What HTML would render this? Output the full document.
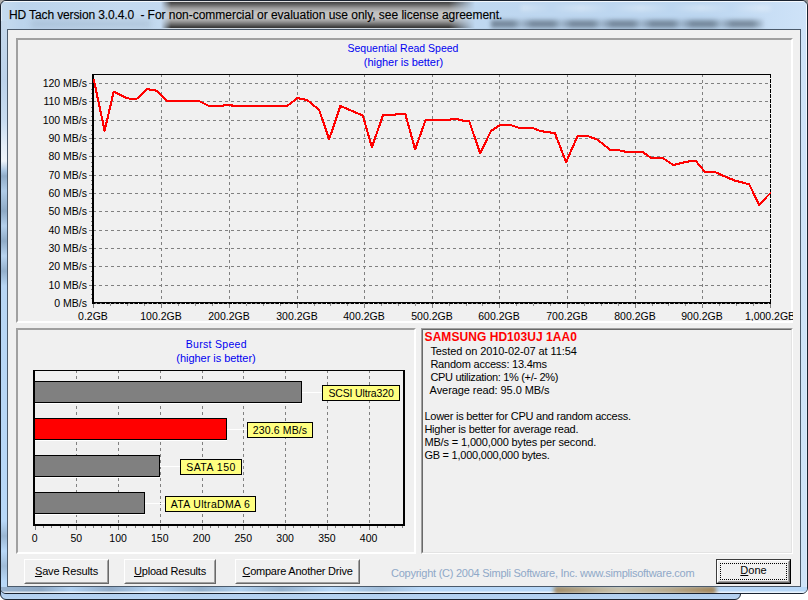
<!DOCTYPE html>
<html><head><meta charset="utf-8"><style>
html,body{margin:0;padding:0;width:808px;height:600px;overflow:hidden;background:#fff;position:relative;font-family:"Liberation Sans",sans-serif;}
.abs{position:absolute;}
#win2{position:absolute;left:0;top:586px;width:739px;height:12px;border:1px solid #1c2633;border-radius:0 0 6px 6px;background:linear-gradient(#a8c8ec,#b8d4f2);}
#win{position:absolute;left:0;top:0;width:806px;height:592px;border:1px solid #1a2330;border-radius:6px;overflow:hidden;
 background:linear-gradient(90deg,#c6dcf0 0,#bcd4ec 20px,#c4daf0 120px,#bcd6f0 700px,#cfe3f8 808px);}
#win .blob{position:absolute;}
#client{position:absolute;left:7px;top:29px;width:792px;height:556px;border:1px solid #4b5a6b;background:#f0f0f0;}
.title{position:absolute;left:8px;top:7px;font-size:12px;color:#000;white-space:pre;letter-spacing:-0.05px;-webkit-text-stroke:0.25px rgba(0,0,0,0.6);}
.sunk{position:absolute;box-sizing:border-box;border:2px solid;border-color:#a0a0a0 #fff #fff #a0a0a0;}
.edge{position:absolute;box-sizing:border-box;border:1px solid;border-color:#a0a0a0 #fff #fff #a0a0a0;}
.edge>div{position:absolute;left:0;top:0;right:0;bottom:0;border:1px solid;border-color:#696969 #e3e3e3 #e3e3e3 #696969;}
svg text.lab{font-family:"Liberation Sans";font-size:10.5px;fill:#000;}
svg text.ttl{font-family:"Liberation Sans";font-size:10.5px;fill:#0000f0;}
.info{position:absolute;font-size:11px;color:#000;white-space:pre;line-height:13px;}
.btn{position:absolute;box-sizing:border-box;background:#f0f0f0;border:1px solid;border-color:#fff #696969 #696969 #fff;}
.btn>div{position:absolute;left:0;top:0;right:0;bottom:0;border:1px solid;border-color:#f0f0f0 #a0a0a0 #a0a0a0 #f0f0f0;}
.btn span{position:absolute;left:0;right:0;top:5px;text-align:center;font-size:11px;color:#000;white-space:pre;line-height:13px;}
.btn u{text-decoration:underline;text-underline-offset:1px;}
</style></head><body>
<div class="abs" style="left:0;top:0;width:8px;height:8px;background:#b0b0b0"></div>
<div class="abs" style="left:800px;top:0;width:8px;height:8px;background:#909090"></div>
<div id="win2"></div>
<div id="win">
 <div class="blob" style="left:-10px;top:0px;width:830px;height:1px;background:rgba(255,255,255,0.8)"></div>
 <div class="blob" style="left:805px;top:0px;width:1px;height:600px;background:linear-gradient(rgba(255,255,255,0.85),rgba(255,255,255,0.3) 300px)"></div>
 <div class="blob" style="left:0px;top:0px;width:1px;height:600px;background:rgba(255,255,255,0.45)"></div>
 <div class="blob" style="left:160px;top:0px;width:316px;height:28px;background:linear-gradient(#e0e0e0 0,#e0e0e0 1px,#404040 1px,#5a5a5a 3px,#9a9a9a 7px,#c0c0c0 11px,#c4c4c4 17px,#909090 21px,#505050 25px,#3a3a3a 26px,#3a3a3a 27px,#d0d8e0 27px);-webkit-mask-image:linear-gradient(90deg,transparent 0,#000 10px,#000 288px,transparent 314px)"></div>
 <div class="blob" style="left:490px;top:19px;width:272px;height:8px;background:repeating-linear-gradient(90deg,rgba(60,75,90,0.55) 0,rgba(60,75,90,0.55) 22px,rgba(60,75,90,0.2) 30px,rgba(60,75,90,0.5) 40px);filter:blur(2px)"></div>
 <div class="blob" style="left:520px;top:4px;width:250px;height:6px;background:repeating-linear-gradient(90deg,rgba(255,255,255,0.35) 0,rgba(255,255,255,0) 30px,rgba(255,255,255,0.35) 60px);filter:blur(2px)"></div>
 <div class="blob" style="left:30px;top:19px;width:120px;height:8px;background:rgba(120,140,160,0.25);filter:blur(3px)"></div>
 <div class="title"><span style="letter-spacing:-0.12px">HD Tach version 3.0.4.0  - </span><span style="letter-spacing:-0.03px">For non-commercial or evaluation use only, see license agreement.</span></div>
 <div class="blob" style="left:0px;top:20px;width:6px;height:570px;background:linear-gradient(#c4d8ec 0,#bcd2ea 60px,#c8dcf0 100px,#e4eef8 125px,#eef4fa 140px,#a8c4e0 150px,#90acc8 155px,#b0cce8 170px,#8eaac6 190px,#b4d0ec 205px,#90acc8 220px,#b8d4f0 235px,#94b0cc 250px,#b8d6f4 265px,#b8d8f8 500px,#9ab6d2 515px,#b8d8f8 530px,#a0bcd8 545px,#b8d8f8 560px)"></div>
 <div class="blob" style="left:0px;top:586px;width:806px;height:6px;background:linear-gradient(rgba(255,255,255,0) 4px,rgba(255,255,255,0.7) 5px),linear-gradient(90deg,#98b2ce 0,#8ea8c4 40px,#b0d0f0 70px,#92acc8 110px,#b4d4f4 150px,#94b0cc 200px,#b0d0ee 240px,#94b0cc 280px,#b8d8f8 330px,#a0bcd8 380px,#b8d8f8 420px,#b8d8f8 806px)"></div>
 <div class="blob" style="left:553px;top:585px;width:162px;height:8px;background:linear-gradient(90deg,#a08860,#c8c0a8 40%,#b8a888 70%,#a08050);filter:blur(2px)"></div>
</div>
<div id="client"></div>
<div class="sunk" style="left:16px;top:38px;width:777px;height:285px;"></div>
<div class="sunk" style="left:16px;top:328px;width:400px;height:226px;"></div>
<div class="edge" style="left:421px;top:328px;width:372px;height:226px;"><div></div></div>
<svg class="abs" style="left:0;top:0" width="808" height="600" viewBox="0 0 808 600">
<defs><clipPath id="c1"><rect x="18" y="40" width="775" height="281"/></clipPath></defs>
<g clip-path="url(#c1)">
<line x1="93" y1="83.5" x2="770" y2="83.5" stroke="#808080" stroke-width="1" stroke-dasharray="3,3"/>
<line x1="89" y1="83.5" x2="92" y2="83.5" stroke="#808080" stroke-width="1"/>
<line x1="93" y1="101.5" x2="770" y2="101.5" stroke="#808080" stroke-width="1" stroke-dasharray="3,3"/>
<line x1="89" y1="101.5" x2="92" y2="101.5" stroke="#808080" stroke-width="1"/>
<line x1="93" y1="120.5" x2="770" y2="120.5" stroke="#808080" stroke-width="1" stroke-dasharray="3,3"/>
<line x1="89" y1="120.5" x2="92" y2="120.5" stroke="#808080" stroke-width="1"/>
<line x1="93" y1="138.5" x2="770" y2="138.5" stroke="#808080" stroke-width="1" stroke-dasharray="3,3"/>
<line x1="89" y1="138.5" x2="92" y2="138.5" stroke="#808080" stroke-width="1"/>
<line x1="93" y1="156.5" x2="770" y2="156.5" stroke="#808080" stroke-width="1" stroke-dasharray="3,3"/>
<line x1="89" y1="156.5" x2="92" y2="156.5" stroke="#808080" stroke-width="1"/>
<line x1="93" y1="175.5" x2="770" y2="175.5" stroke="#808080" stroke-width="1" stroke-dasharray="3,3"/>
<line x1="89" y1="175.5" x2="92" y2="175.5" stroke="#808080" stroke-width="1"/>
<line x1="93" y1="193.5" x2="770" y2="193.5" stroke="#808080" stroke-width="1" stroke-dasharray="3,3"/>
<line x1="89" y1="193.5" x2="92" y2="193.5" stroke="#808080" stroke-width="1"/>
<line x1="93" y1="211.5" x2="770" y2="211.5" stroke="#808080" stroke-width="1" stroke-dasharray="3,3"/>
<line x1="89" y1="211.5" x2="92" y2="211.5" stroke="#808080" stroke-width="1"/>
<line x1="93" y1="230.5" x2="770" y2="230.5" stroke="#808080" stroke-width="1" stroke-dasharray="3,3"/>
<line x1="89" y1="230.5" x2="92" y2="230.5" stroke="#808080" stroke-width="1"/>
<line x1="93" y1="248.5" x2="770" y2="248.5" stroke="#808080" stroke-width="1" stroke-dasharray="3,3"/>
<line x1="89" y1="248.5" x2="92" y2="248.5" stroke="#808080" stroke-width="1"/>
<line x1="93" y1="266.5" x2="770" y2="266.5" stroke="#808080" stroke-width="1" stroke-dasharray="3,3"/>
<line x1="89" y1="266.5" x2="92" y2="266.5" stroke="#808080" stroke-width="1"/>
<line x1="93" y1="285.5" x2="770" y2="285.5" stroke="#808080" stroke-width="1" stroke-dasharray="3,3"/>
<line x1="89" y1="285.5" x2="92" y2="285.5" stroke="#808080" stroke-width="1"/>
<line x1="91" y1="298.5" x2="92" y2="298.5" stroke="#808080" stroke-width="1"/>
<line x1="91" y1="294.5" x2="92" y2="294.5" stroke="#808080" stroke-width="1"/>
<line x1="91" y1="289.5" x2="92" y2="289.5" stroke="#808080" stroke-width="1"/>
<line x1="91" y1="280.5" x2="92" y2="280.5" stroke="#808080" stroke-width="1"/>
<line x1="91" y1="276.5" x2="92" y2="276.5" stroke="#808080" stroke-width="1"/>
<line x1="91" y1="271.5" x2="92" y2="271.5" stroke="#808080" stroke-width="1"/>
<line x1="91" y1="262.5" x2="92" y2="262.5" stroke="#808080" stroke-width="1"/>
<line x1="91" y1="257.5" x2="92" y2="257.5" stroke="#808080" stroke-width="1"/>
<line x1="91" y1="253.5" x2="92" y2="253.5" stroke="#808080" stroke-width="1"/>
<line x1="91" y1="244.5" x2="92" y2="244.5" stroke="#808080" stroke-width="1"/>
<line x1="91" y1="239.5" x2="92" y2="239.5" stroke="#808080" stroke-width="1"/>
<line x1="91" y1="235.5" x2="92" y2="235.5" stroke="#808080" stroke-width="1"/>
<line x1="91" y1="225.5" x2="92" y2="225.5" stroke="#808080" stroke-width="1"/>
<line x1="91" y1="221.5" x2="92" y2="221.5" stroke="#808080" stroke-width="1"/>
<line x1="91" y1="216.5" x2="92" y2="216.5" stroke="#808080" stroke-width="1"/>
<line x1="91" y1="207.5" x2="92" y2="207.5" stroke="#808080" stroke-width="1"/>
<line x1="91" y1="203.5" x2="92" y2="203.5" stroke="#808080" stroke-width="1"/>
<line x1="91" y1="198.5" x2="92" y2="198.5" stroke="#808080" stroke-width="1"/>
<line x1="91" y1="189.5" x2="92" y2="189.5" stroke="#808080" stroke-width="1"/>
<line x1="91" y1="184.5" x2="92" y2="184.5" stroke="#808080" stroke-width="1"/>
<line x1="91" y1="180.5" x2="92" y2="180.5" stroke="#808080" stroke-width="1"/>
<line x1="91" y1="171.5" x2="92" y2="171.5" stroke="#808080" stroke-width="1"/>
<line x1="91" y1="166.5" x2="92" y2="166.5" stroke="#808080" stroke-width="1"/>
<line x1="91" y1="162.5" x2="92" y2="162.5" stroke="#808080" stroke-width="1"/>
<line x1="91" y1="152.5" x2="92" y2="152.5" stroke="#808080" stroke-width="1"/>
<line x1="91" y1="148.5" x2="92" y2="148.5" stroke="#808080" stroke-width="1"/>
<line x1="91" y1="143.5" x2="92" y2="143.5" stroke="#808080" stroke-width="1"/>
<line x1="91" y1="134.5" x2="92" y2="134.5" stroke="#808080" stroke-width="1"/>
<line x1="91" y1="130.5" x2="92" y2="130.5" stroke="#808080" stroke-width="1"/>
<line x1="91" y1="125.5" x2="92" y2="125.5" stroke="#808080" stroke-width="1"/>
<line x1="91" y1="116.5" x2="92" y2="116.5" stroke="#808080" stroke-width="1"/>
<line x1="91" y1="111.5" x2="92" y2="111.5" stroke="#808080" stroke-width="1"/>
<line x1="91" y1="107.5" x2="92" y2="107.5" stroke="#808080" stroke-width="1"/>
<line x1="91" y1="98.5" x2="92" y2="98.5" stroke="#808080" stroke-width="1"/>
<line x1="91" y1="93.5" x2="92" y2="93.5" stroke="#808080" stroke-width="1"/>
<line x1="91" y1="89.5" x2="92" y2="89.5" stroke="#808080" stroke-width="1"/>
<line x1="161.5" y1="74" x2="161.5" y2="302" stroke="#808080" stroke-width="1" stroke-dasharray="3,3"/>
<line x1="229.5" y1="74" x2="229.5" y2="302" stroke="#808080" stroke-width="1" stroke-dasharray="3,3"/>
<line x1="297.5" y1="74" x2="297.5" y2="302" stroke="#808080" stroke-width="1" stroke-dasharray="3,3"/>
<line x1="364.5" y1="74" x2="364.5" y2="302" stroke="#808080" stroke-width="1" stroke-dasharray="3,3"/>
<line x1="432.5" y1="74" x2="432.5" y2="302" stroke="#808080" stroke-width="1" stroke-dasharray="3,3"/>
<line x1="499.5" y1="74" x2="499.5" y2="302" stroke="#808080" stroke-width="1" stroke-dasharray="3,3"/>
<line x1="567.5" y1="74" x2="567.5" y2="302" stroke="#808080" stroke-width="1" stroke-dasharray="3,3"/>
<line x1="635.5" y1="74" x2="635.5" y2="302" stroke="#808080" stroke-width="1" stroke-dasharray="3,3"/>
<line x1="702.5" y1="74" x2="702.5" y2="302" stroke="#808080" stroke-width="1" stroke-dasharray="3,3"/>
<line x1="93.5" y1="304" x2="93.5" y2="308" stroke="#808080" stroke-width="1"/>
<line x1="161.5" y1="304" x2="161.5" y2="308" stroke="#808080" stroke-width="1"/>
<line x1="229.5" y1="304" x2="229.5" y2="308" stroke="#808080" stroke-width="1"/>
<line x1="297.5" y1="304" x2="297.5" y2="308" stroke="#808080" stroke-width="1"/>
<line x1="364.5" y1="304" x2="364.5" y2="308" stroke="#808080" stroke-width="1"/>
<line x1="432.5" y1="304" x2="432.5" y2="308" stroke="#808080" stroke-width="1"/>
<line x1="499.5" y1="304" x2="499.5" y2="308" stroke="#808080" stroke-width="1"/>
<line x1="567.5" y1="304" x2="567.5" y2="308" stroke="#808080" stroke-width="1"/>
<line x1="635.5" y1="304" x2="635.5" y2="308" stroke="#808080" stroke-width="1"/>
<line x1="702.5" y1="304" x2="702.5" y2="308" stroke="#808080" stroke-width="1"/>
<line x1="770.5" y1="304" x2="770.5" y2="308" stroke="#808080" stroke-width="1"/>
<line x1="110.5" y1="304" x2="110.5" y2="306" stroke="#909090" stroke-width="1"/>
<line x1="127.5" y1="304" x2="127.5" y2="306" stroke="#909090" stroke-width="1"/>
<line x1="144.5" y1="304" x2="144.5" y2="306" stroke="#909090" stroke-width="1"/>
<line x1="178.5" y1="304" x2="178.5" y2="306" stroke="#909090" stroke-width="1"/>
<line x1="195.5" y1="304" x2="195.5" y2="306" stroke="#909090" stroke-width="1"/>
<line x1="212.5" y1="304" x2="212.5" y2="306" stroke="#909090" stroke-width="1"/>
<line x1="246.5" y1="304" x2="246.5" y2="306" stroke="#909090" stroke-width="1"/>
<line x1="263.5" y1="304" x2="263.5" y2="306" stroke="#909090" stroke-width="1"/>
<line x1="280.5" y1="304" x2="280.5" y2="306" stroke="#909090" stroke-width="1"/>
<line x1="314.5" y1="304" x2="314.5" y2="306" stroke="#909090" stroke-width="1"/>
<line x1="330.5" y1="304" x2="330.5" y2="306" stroke="#909090" stroke-width="1"/>
<line x1="347.5" y1="304" x2="347.5" y2="306" stroke="#909090" stroke-width="1"/>
<line x1="381.5" y1="304" x2="381.5" y2="306" stroke="#909090" stroke-width="1"/>
<line x1="398.5" y1="304" x2="398.5" y2="306" stroke="#909090" stroke-width="1"/>
<line x1="415.5" y1="304" x2="415.5" y2="306" stroke="#909090" stroke-width="1"/>
<line x1="449.5" y1="304" x2="449.5" y2="306" stroke="#909090" stroke-width="1"/>
<line x1="466.5" y1="304" x2="466.5" y2="306" stroke="#909090" stroke-width="1"/>
<line x1="482.5" y1="304" x2="482.5" y2="306" stroke="#909090" stroke-width="1"/>
<line x1="516.5" y1="304" x2="516.5" y2="306" stroke="#909090" stroke-width="1"/>
<line x1="533.5" y1="304" x2="533.5" y2="306" stroke="#909090" stroke-width="1"/>
<line x1="550.5" y1="304" x2="550.5" y2="306" stroke="#909090" stroke-width="1"/>
<line x1="584.5" y1="304" x2="584.5" y2="306" stroke="#909090" stroke-width="1"/>
<line x1="601.5" y1="304" x2="601.5" y2="306" stroke="#909090" stroke-width="1"/>
<line x1="618.5" y1="304" x2="618.5" y2="306" stroke="#909090" stroke-width="1"/>
<line x1="652.5" y1="304" x2="652.5" y2="306" stroke="#909090" stroke-width="1"/>
<line x1="668.5" y1="304" x2="668.5" y2="306" stroke="#909090" stroke-width="1"/>
<line x1="685.5" y1="304" x2="685.5" y2="306" stroke="#909090" stroke-width="1"/>
<line x1="719.5" y1="304" x2="719.5" y2="306" stroke="#909090" stroke-width="1"/>
<line x1="736.5" y1="304" x2="736.5" y2="306" stroke="#909090" stroke-width="1"/>
<line x1="753.5" y1="304" x2="753.5" y2="306" stroke="#909090" stroke-width="1"/>
<rect x="92" y="74" width="2" height="230" fill="#000"/>
<rect x="92" y="302" width="679" height="1" fill="#000"/>
<line x1="92" y1="303.5" x2="771" y2="303.5" stroke="#000" stroke-width="1" stroke-dasharray="3.7,1"/>
<rect x="92" y="74" width="679" height="1" fill="#000"/>
<line x1="770.5" y1="74" x2="770.5" y2="302" stroke="#000" stroke-width="1" stroke-dasharray="4,1"/>
<path d="M93.9,80.2 L104.6,130.7 L113.7,91.7 L125.6,97.6 L130.6,99.0 L136.5,99.0 L147.0,89.1 L156.3,90.7 L167.2,101.0 L198.9,101.0 L208.8,105.9 L222.7,105.9 L224.6,105.2 L232.6,105.5 L234.5,106.1 L287.1,106.0 L297.4,98.1 L307.3,100.1 L313.3,105.1 L319.2,110.0 L329.1,139.3 L340.4,106.0 L362.8,115.5 L371.9,147.2 L383.0,115.3 L394.5,115.0 L395.9,114.2 L405.4,114.2 L415.1,149.4 L425.6,120.1 L448.4,120.1 L451.4,119.3 L457.3,119.3 L463.3,120.7 L469.2,121.1 L480.1,153.4 L491.0,131.0 L499.9,125.1 L510.8,125.1 L519.7,128.0 L532.6,128.0 L540.5,131.0 L546.4,132.0 L554.9,133.1 L566.1,162.2 L577.6,136.0 L587.5,136.0 L597.4,139.6 L603.4,144.4 L610.3,149.9 L619.2,150.3 L626.1,151.9 L643.0,152.3 L650.9,157.8 L662.8,158.0 L673.5,165.1 L681.0,163.0 L690.0,161.2 L696.0,161.2 L705.0,172.0 L715.5,172.3 L727.5,177.6 L735.0,180.6 L749.2,184.3 L759.0,204.6 L770.2,193.3" fill="none" stroke="#ff0000" stroke-width="2.1" stroke-linejoin="round" stroke-linecap="round" shape-rendering="crispEdges"/>
<text x="87" y="87" text-anchor="end" class="lab">120 MB/s</text>
<text x="87" y="105" text-anchor="end" class="lab">110 MB/s</text>
<text x="87" y="124" text-anchor="end" class="lab">100 MB/s</text>
<text x="87" y="142" text-anchor="end" class="lab">90 MB/s</text>
<text x="87" y="160" text-anchor="end" class="lab">80 MB/s</text>
<text x="87" y="179" text-anchor="end" class="lab">70 MB/s</text>
<text x="87" y="197" text-anchor="end" class="lab">60 MB/s</text>
<text x="87" y="215" text-anchor="end" class="lab">50 MB/s</text>
<text x="87" y="234" text-anchor="end" class="lab">40 MB/s</text>
<text x="87" y="252" text-anchor="end" class="lab">30 MB/s</text>
<text x="87" y="270" text-anchor="end" class="lab">20 MB/s</text>
<text x="87" y="289" text-anchor="end" class="lab">10 MB/s</text>
<text x="87" y="307" text-anchor="end" class="lab">0 MB/s</text>
<text x="93" y="320" text-anchor="middle" class="lab">0.2GB</text>
<text x="161" y="320" text-anchor="middle" class="lab">100.2GB</text>
<text x="229" y="320" text-anchor="middle" class="lab">200.2GB</text>
<text x="297" y="320" text-anchor="middle" class="lab">300.2GB</text>
<text x="364" y="320" text-anchor="middle" class="lab">400.2GB</text>
<text x="432" y="320" text-anchor="middle" class="lab">500.2GB</text>
<text x="499" y="320" text-anchor="middle" class="lab">600.2GB</text>
<text x="567" y="320" text-anchor="middle" class="lab">700.2GB</text>
<text x="635" y="320" text-anchor="middle" class="lab">800.2GB</text>
<text x="702" y="320" text-anchor="middle" class="lab">900.2GB</text>
<text x="770" y="320" text-anchor="middle" class="lab">1,000.2GB</text>
<text x="403" y="52.3" text-anchor="middle" class="ttl" style="letter-spacing:0px">Sequential Read Speed</text>
<text x="403.5" y="66.2" text-anchor="middle" class="ttl" style="letter-spacing:-0.04px;font-size:11px">(higher is better)</text>
</g>
<line x1="76.5" y1="370" x2="76.5" y2="524" stroke="#808080" stroke-width="1" stroke-dasharray="3,3"/>
<line x1="118.5" y1="370" x2="118.5" y2="524" stroke="#808080" stroke-width="1" stroke-dasharray="3,3"/>
<line x1="160.5" y1="370" x2="160.5" y2="524" stroke="#808080" stroke-width="1" stroke-dasharray="3,3"/>
<line x1="202.5" y1="370" x2="202.5" y2="524" stroke="#808080" stroke-width="1" stroke-dasharray="3,3"/>
<line x1="243.5" y1="370" x2="243.5" y2="524" stroke="#808080" stroke-width="1" stroke-dasharray="3,3"/>
<line x1="285.5" y1="370" x2="285.5" y2="524" stroke="#808080" stroke-width="1" stroke-dasharray="3,3"/>
<line x1="327.5" y1="370" x2="327.5" y2="524" stroke="#808080" stroke-width="1" stroke-dasharray="3,3"/>
<line x1="369.5" y1="370" x2="369.5" y2="524" stroke="#808080" stroke-width="1" stroke-dasharray="3,3"/>
<line x1="35.5" y1="526" x2="35.5" y2="530" stroke="#808080" stroke-width="1"/>
<line x1="43.5" y1="526" x2="43.5" y2="528" stroke="#808080" stroke-width="1"/>
<line x1="51.5" y1="526" x2="51.5" y2="528" stroke="#808080" stroke-width="1"/>
<line x1="60.5" y1="526" x2="60.5" y2="528" stroke="#808080" stroke-width="1"/>
<line x1="68.5" y1="526" x2="68.5" y2="528" stroke="#808080" stroke-width="1"/>
<line x1="76.5" y1="526" x2="76.5" y2="530" stroke="#808080" stroke-width="1"/>
<line x1="85.5" y1="526" x2="85.5" y2="528" stroke="#808080" stroke-width="1"/>
<line x1="93.5" y1="526" x2="93.5" y2="528" stroke="#808080" stroke-width="1"/>
<line x1="101.5" y1="526" x2="101.5" y2="528" stroke="#808080" stroke-width="1"/>
<line x1="110.5" y1="526" x2="110.5" y2="528" stroke="#808080" stroke-width="1"/>
<line x1="118.5" y1="526" x2="118.5" y2="530" stroke="#808080" stroke-width="1"/>
<line x1="126.5" y1="526" x2="126.5" y2="528" stroke="#808080" stroke-width="1"/>
<line x1="135.5" y1="526" x2="135.5" y2="528" stroke="#808080" stroke-width="1"/>
<line x1="143.5" y1="526" x2="143.5" y2="528" stroke="#808080" stroke-width="1"/>
<line x1="152.5" y1="526" x2="152.5" y2="528" stroke="#808080" stroke-width="1"/>
<line x1="160.5" y1="526" x2="160.5" y2="530" stroke="#808080" stroke-width="1"/>
<line x1="168.5" y1="526" x2="168.5" y2="528" stroke="#808080" stroke-width="1"/>
<line x1="177.5" y1="526" x2="177.5" y2="528" stroke="#808080" stroke-width="1"/>
<line x1="185.5" y1="526" x2="185.5" y2="528" stroke="#808080" stroke-width="1"/>
<line x1="193.5" y1="526" x2="193.5" y2="528" stroke="#808080" stroke-width="1"/>
<line x1="202.5" y1="526" x2="202.5" y2="530" stroke="#808080" stroke-width="1"/>
<line x1="210.5" y1="526" x2="210.5" y2="528" stroke="#808080" stroke-width="1"/>
<line x1="218.5" y1="526" x2="218.5" y2="528" stroke="#808080" stroke-width="1"/>
<line x1="227.5" y1="526" x2="227.5" y2="528" stroke="#808080" stroke-width="1"/>
<line x1="235.5" y1="526" x2="235.5" y2="528" stroke="#808080" stroke-width="1"/>
<line x1="243.5" y1="526" x2="243.5" y2="530" stroke="#808080" stroke-width="1"/>
<line x1="252.5" y1="526" x2="252.5" y2="528" stroke="#808080" stroke-width="1"/>
<line x1="260.5" y1="526" x2="260.5" y2="528" stroke="#808080" stroke-width="1"/>
<line x1="268.5" y1="526" x2="268.5" y2="528" stroke="#808080" stroke-width="1"/>
<line x1="277.5" y1="526" x2="277.5" y2="528" stroke="#808080" stroke-width="1"/>
<line x1="285.5" y1="526" x2="285.5" y2="530" stroke="#808080" stroke-width="1"/>
<line x1="293.5" y1="526" x2="293.5" y2="528" stroke="#808080" stroke-width="1"/>
<line x1="302.5" y1="526" x2="302.5" y2="528" stroke="#808080" stroke-width="1"/>
<line x1="310.5" y1="526" x2="310.5" y2="528" stroke="#808080" stroke-width="1"/>
<line x1="318.5" y1="526" x2="318.5" y2="528" stroke="#808080" stroke-width="1"/>
<line x1="327.5" y1="526" x2="327.5" y2="530" stroke="#808080" stroke-width="1"/>
<line x1="335.5" y1="526" x2="335.5" y2="528" stroke="#808080" stroke-width="1"/>
<line x1="344.5" y1="526" x2="344.5" y2="528" stroke="#808080" stroke-width="1"/>
<line x1="352.5" y1="526" x2="352.5" y2="528" stroke="#808080" stroke-width="1"/>
<line x1="360.5" y1="526" x2="360.5" y2="528" stroke="#808080" stroke-width="1"/>
<line x1="369.5" y1="526" x2="369.5" y2="530" stroke="#808080" stroke-width="1"/>
<line x1="377.5" y1="526" x2="377.5" y2="528" stroke="#808080" stroke-width="1"/>
<line x1="385.5" y1="526" x2="385.5" y2="528" stroke="#808080" stroke-width="1"/>
<line x1="394.5" y1="526" x2="394.5" y2="528" stroke="#808080" stroke-width="1"/>
<line x1="402.5" y1="526" x2="402.5" y2="528" stroke="#808080" stroke-width="1"/>
<rect x="34" y="381" width="267" height="21" fill="#808080" stroke="#000" stroke-width="1" transform="translate(0.5,0.5)"/>
<rect x="35" y="403" width="267" height="1" fill="#fff"/>
<rect x="34" y="418" width="192" height="21" fill="#ff0000" stroke="#000" stroke-width="1" transform="translate(0.5,0.5)"/>
<rect x="35" y="440" width="192" height="1" fill="#fff"/>
<rect x="34" y="455" width="125" height="21" fill="#808080" stroke="#000" stroke-width="1" transform="translate(0.5,0.5)"/>
<rect x="35" y="477" width="125" height="1" fill="#fff"/>
<rect x="34" y="492" width="110" height="21" fill="#808080" stroke="#000" stroke-width="1" transform="translate(0.5,0.5)"/>
<rect x="35" y="514" width="110" height="1" fill="#fff"/>
<line x1="302" y1="392.5" x2="322" y2="392.5" stroke="#fff" stroke-width="1"/>
<rect x="322.5" y="385.5" width="77" height="15" fill="#ffff80" stroke="#000" stroke-width="1"/>
<text x="361.0" y="396.6" text-anchor="middle" class="lab" style="letter-spacing:-0.15px">SCSI Ultra320</text>
<line x1="227" y1="429.5" x2="247" y2="429.5" stroke="#fff" stroke-width="1"/>
<rect x="247.5" y="422.5" width="65" height="15" fill="#ffff80" stroke="#000" stroke-width="1"/>
<text x="280.0" y="433.6" text-anchor="middle" class="lab" style="letter-spacing:0.13px">230.6 MB/s</text>
<line x1="160" y1="466.5" x2="180" y2="466.5" stroke="#fff" stroke-width="1"/>
<rect x="180.5" y="459.5" width="61" height="15" fill="#ffff80" stroke="#000" stroke-width="1"/>
<text x="211.0" y="470.6" text-anchor="middle" class="lab" style="letter-spacing:0.5px">SATA 150</text>
<line x1="145" y1="503.5" x2="165" y2="503.5" stroke="#fff" stroke-width="1"/>
<rect x="165.5" y="496.5" width="90" height="15" fill="#ffff80" stroke="#000" stroke-width="1"/>
<text x="210.5" y="507.6" text-anchor="middle" class="lab" style="letter-spacing:0.33px">ATA UltraDMA 6</text>
<rect x="33" y="370" width="2" height="156" fill="#000"/>
<rect x="33" y="524" width="372" height="2" fill="#000"/>
<rect x="33" y="370" width="372" height="1" fill="#000"/>
<rect x="403" y="370" width="2" height="156" fill="#000"/>
<text x="34.6" y="542" text-anchor="middle" class="lab">0</text>
<text x="76.3" y="542" text-anchor="middle" class="lab">50</text>
<text x="118.1" y="542" text-anchor="middle" class="lab">100</text>
<text x="159.8" y="542" text-anchor="middle" class="lab">150</text>
<text x="201.6" y="542" text-anchor="middle" class="lab">200</text>
<text x="243.3" y="542" text-anchor="middle" class="lab">250</text>
<text x="285.1" y="542" text-anchor="middle" class="lab">300</text>
<text x="326.9" y="542" text-anchor="middle" class="lab">350</text>
<text x="368.6" y="542" text-anchor="middle" class="lab">400</text>
<text x="216.3" y="348.3" text-anchor="middle" class="ttl" style="letter-spacing:0.3px">Burst Speed</text>
<text x="216" y="361.6" text-anchor="middle" class="ttl" style="letter-spacing:-0.04px;font-size:11px">(higher is better)</text>
</svg>
<div class="info" style="left:424.6px;top:331.1px;color:#ff0000;font-weight:bold;font-size:12px;letter-spacing:0.05px">SAMSUNG HD103UJ 1AA0</div>
<div class="info" style="left:430.4px;top:344.6px;letter-spacing:-0.09px">Tested on 2010-02-07 at 11:54</div>
<div class="info" style="left:430.4px;top:357.6px;letter-spacing:-0.22px">Random access: 13.4ms</div>
<div class="info" style="left:430.4px;top:370.6px;letter-spacing:-0.32px">CPU utilization: 1% (+/- 2%)</div>
<div class="info" style="left:429.6px;top:383.6px;letter-spacing:-0.07px">Average read: 95.0 MB/s</div>
<div class="info" style="left:424.4px;top:409.6px;letter-spacing:-0.24px">Lower is better for CPU and random access.</div>
<div class="info" style="left:424.4px;top:422.6px;letter-spacing:-0.22px">Higher is better for average read.</div>
<div class="info" style="left:424.4px;top:435.6px;letter-spacing:-0.14px">MB/s = 1,000,000 bytes per second.</div>
<div class="info" style="left:424.4px;top:448.6px;letter-spacing:-0.24px">GB = 1,000,000,000 bytes.</div>
<div class="btn" style="left:24px;top:559px;width:85px;height:25px;"><div></div><span style="letter-spacing:-0.14px"><u>S</u>ave Results</span></div>
<div class="btn" style="left:124px;top:559px;width:92px;height:25px;"><div></div><span style="letter-spacing:-0.18px"><u>U</u>pload Results</span></div>
<div class="btn" style="left:235px;top:559px;width:125px;height:25px;"><div></div><span style="letter-spacing:-0.23px"><u>C</u>ompare Another Drive</span></div>
<div class="abs" style="left:391px;top:567.3px;font-size:11px;letter-spacing:-0.25px;color:#8fa8c8;white-space:pre;">Copyright (C) 2004 Simpli Software, Inc. www.simplisoftware.com</div>
<div class="btn" style="left:716px;top:559px;width:75px;height:25px;border:1px solid;border-color:#3c3c3c #000 #000 #3c3c3c;"><div style="border-color:#fff #696969 #696969 #fff;"></div><div style="left:1px;top:1px;right:1px;bottom:1px;border-color:#f0f0f0 #a0a0a0 #a0a0a0 #f0f0f0;"></div><div style="left:3px;top:3px;right:3px;bottom:3px;border:1px dotted #000;"></div><span style="top:4.3px"><u>D</u>one</span></div>
</body></html>
